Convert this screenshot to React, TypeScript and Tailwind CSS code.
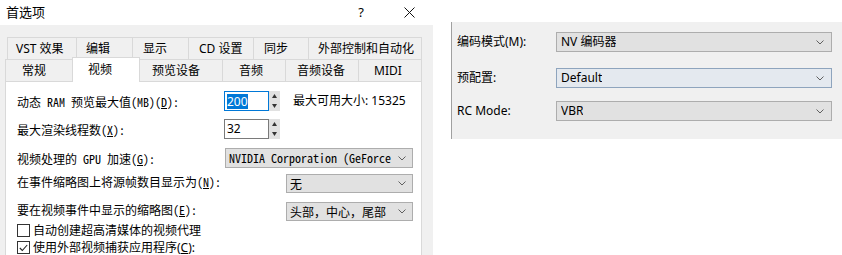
import React from "react";

const ui = "font-['Noto_Sans','Noto_Sans_CJK_SC',sans-serif]";
const sim = "font-['Noto_Sans_Mono_CJK_SC','Liberation_Mono','Noto_Sans_CJK_SC',monospace]";

function Chevron() {
  return (
    <svg width="8" height="5" viewBox="0 0 8 5" className="shrink-0">
      <polyline points="0.5,0.5 4,4 7.5,0.5" fill="none" stroke="#606060" strokeWidth="1" />
    </svg>
  );
}

function Select({ text, mono = false, className = "" }: { text: string; mono?: boolean; className?: string }) {
  return (
    <div
      className={`h-full flex items-center justify-between pl-[3px] pr-[6px] bg-[#e1e1e1] border border-[#adadad] text-[12px] text-black ${mono ? sim : ui} ${className}`}
    >
      <span className="whitespace-nowrap overflow-hidden">{text}</span>
      <Chevron />
    </div>
  );
}

function Spinner({ value, focused = false }: { value: string; focused?: boolean }) {
  return (
    <div className="flex h-[20px]">
      <div
        className={`w-[45px] h-full flex items-center pl-[2px] bg-white border ${focused ? "border-[#0078d7]" : "border-[#7a7a7a]"} ${ui} text-[12px]`}
      >
        <span className={focused ? "bg-[#0078d7] text-white leading-[15px]" : "text-black"}>{value}</span>
      </div>
      <div className="w-[11px] h-full flex flex-col bg-[#e1e1e1]">
        <div className="flex-1 flex items-center justify-center">
          <svg width="5" height="4" viewBox="0 0 5 4">
            <polygon points="2.5,0 5,4 0,4" fill="#333" />
          </svg>
        </div>
        <div className="flex-1 flex items-center justify-center">
          <svg width="5" height="4" viewBox="0 0 5 4">
            <polygon points="0,0 5,0 2.5,4" fill="#333" />
          </svg>
        </div>
      </div>
    </div>
  );
}

function Label({ pre, key2, post = "):" }: { pre: string; key2: string; post?: string }) {
  return (
    <span className={`${sim} text-[12px] text-black whitespace-nowrap`}>
      {pre}
      <span className="underline">{key2}</span>
      {post}
    </span>
  );
}

function CheckBox({ checked }: { checked: boolean }) {
  return (
    <div className="w-[13px] h-[13px] border border-[#333] bg-white flex items-center justify-center shrink-0">
      {checked && (
        <svg width="9" height="8" viewBox="0 0 9 8">
          <polyline points="0.8,4 3.3,6.5 8.2,1" fill="none" stroke="#222" strokeWidth="1.1" />
        </svg>
      )}
    </div>
  );
}

const row1 = [
  { t: "VST 效果", w: "w-[69px]", p: "pl-[8px]" },
  { t: "编辑", w: "w-[56px]", p: "pl-[9px]" },
  { t: "显示", w: "w-[56px]", p: "pl-[10px]" },
  { t: "CD 设置", w: "w-[65px]", p: "pl-[10px]" },
  { t: "同步", w: "w-[55px]", p: "pl-[10px]" },
  { t: "外部控制和自动化", w: "w-[114px]", p: "pl-[9px]" },
];

const row2 = [
  { t: "常规", w: "w-[67px]", p: "pl-[16px]" },
  { t: "视频", w: "w-[68px]", p: "pl-[15px]" },
  { t: "预览设备", w: "w-[82px]", p: "pl-[12px]" },
  { t: "音频", w: "w-[63px]", p: "pl-[16px]" },
  { t: "音频设备", w: "w-[73px]", p: "pl-[11px]" },
  { t: "MIDI", w: "w-[64px]", p: "pl-[15px]" },
];

export default function App() {
  return (
    <div className={`flex w-[842px] h-[255px] bg-white overflow-hidden ${ui}`}>
      {/* left dialog */}
      <div className="w-[433px] h-full flex flex-col shrink-0">
        <div className="h-[25px] flex items-center bg-white">
          <span className="pl-[6px] text-[13px] text-black">首选项</span>
          <span className="ml-auto mr-[40px] text-[13px] text-black">?</span>
          <svg width="11" height="11" viewBox="0 0 11 11" className="mr-[18px]">
            <line x1="0.5" y1="0.5" x2="10.5" y2="10.5" stroke="#111" strokeWidth="1" />
            <line x1="10.5" y1="0.5" x2="0.5" y2="10.5" stroke="#111" strokeWidth="1" />
          </svg>
        </div>
        <div className="flex-1 bg-[#f0f0f0] pt-[12px] flex flex-col">
          <div className="flex h-[22px] pl-[7px]">
            {row1.map((tab, i) => (
              <div
                key={i}
                className={`${tab.w} ${tab.p} h-full flex items-center border-t border-l border-[#d9d9d9] ${i === row1.length - 1 ? "border-r" : ""} text-[12px] text-black whitespace-nowrap`}
              >
                {tab.t}
              </div>
            ))}
          </div>
          <div className="flex h-[22px] pl-[5px] items-start">
            {row2.map((tab, i) =>
              i === 1 ? (
                <div
                  key={i}
                  className={`${tab.w} ${tab.p} h-[25px] -mt-[2px] relative z-10 bg-white flex items-center border-t border-l border-r border-[#d9d9d9] text-[12px] text-black whitespace-nowrap`}
                >
                  {tab.t}
                </div>
              ) : (
                <div
                  key={i}
                  className={`${tab.w} ${tab.p} h-full flex items-center border-t ${i === 2 ? "" : "border-l"} border-[#d9d9d9] ${i === row2.length - 1 ? "border-r" : ""} text-[12px] text-black whitespace-nowrap`}
                >
                  {tab.t}
                </div>
              )
            )}
          </div>
          <div className="ml-[5px] w-[417px] flex-1 bg-white border-t border-l border-r border-[#d9d9d9] pl-[11px] pt-[9px] flex flex-col">
            <div className="flex items-center h-[20px]">
              <div className="w-[207px]">
                <Label pre="动态 RAM 预览最大值(MB)(" key2="D" />
              </div>
              <Spinner value="200" focused />
              <span className="ml-[13px] text-[12px] text-black whitespace-nowrap">最大可用大小: 15325</span>
            </div>
            <div className="flex items-center h-[20px] mt-[8px]">
              <div className="w-[207px]">
                <Label pre="最大渲染线程数(" key2="X" />
              </div>
              <Spinner value="32" />
            </div>
            <div className="flex items-center h-[20px] mt-[9px]">
              <div className="w-[208px]">
                <Label pre="视频处理的 GPU 加速(" key2="G" />
              </div>
              <div className="w-[188px] h-full">
                <Select text="NVIDIA Corporation (GeForce" mono />
              </div>
            </div>
            <div className="flex items-center h-[19px] mt-[6px]">
              <div className="w-[269px] pb-[5px]">
                <Label pre="在事件缩略图上将源帧数目显示为(" key2="N" />
              </div>
              <div className="w-[127px] h-full">
                <Select text="无" mono />
              </div>
            </div>
            <div className="flex items-center h-[19px] mt-[9px]">
              <div className="w-[269px] pb-[6px]">
                <Label pre="要在视频事件中显示的缩略图(" key2="E" />
              </div>
              <div className="w-[127px] h-full">
                <Select text="头部，中心，尾部" mono />
              </div>
            </div>
            <div className="flex items-center h-[15px] mt-[2px] gap-[3px]">
              <CheckBox checked={false} />
              <span className="text-[12px] text-black whitespace-nowrap">自动创建超高清媒体的视频代理</span>
            </div>
            <div className="flex items-center h-[15px] mt-[2px] gap-[3px]">
              <CheckBox checked />
              <span className="text-[12px] text-black whitespace-nowrap">
                使用外部视频捕获应用程序(<span className="underline">C</span>):
              </span>
            </div>
          </div>
        </div>
      </div>

      {/* right panel */}
      <div className="ml-[18px] mt-[22px] w-[391px] h-[117px] bg-[#f0f0f0] border-l border-[#a0a0a0] pl-[5px] pr-[10px] pt-[10px] flex flex-col text-[12px] text-black">
        <div className="flex items-center h-[20px]">
          <span className="w-[99px] whitespace-nowrap">编码模式(M):</span>
          <div className="flex-1 h-full">
            <Select text="NV 编码器" className="pl-[4px] pr-[7px]" />
          </div>
        </div>
        <div className="flex items-center h-[20px] mt-[16px]">
          <span className="w-[99px] whitespace-nowrap">预配置:</span>
          <div className="flex-1 h-full">
            <Select text="Default" className="pl-[4px] pr-[7px] !bg-[#e4e9ef] !border-[#8ea4bd]" />
          </div>
        </div>
        <div className="flex items-center h-[20px] mt-[13px]">
          <span className="w-[99px] whitespace-nowrap">RC Mode:</span>
          <div className="flex-1 h-full">
            <Select text="VBR" className="pl-[4px] pr-[7px]" />
          </div>
        </div>
      </div>
    </div>
  );
}
